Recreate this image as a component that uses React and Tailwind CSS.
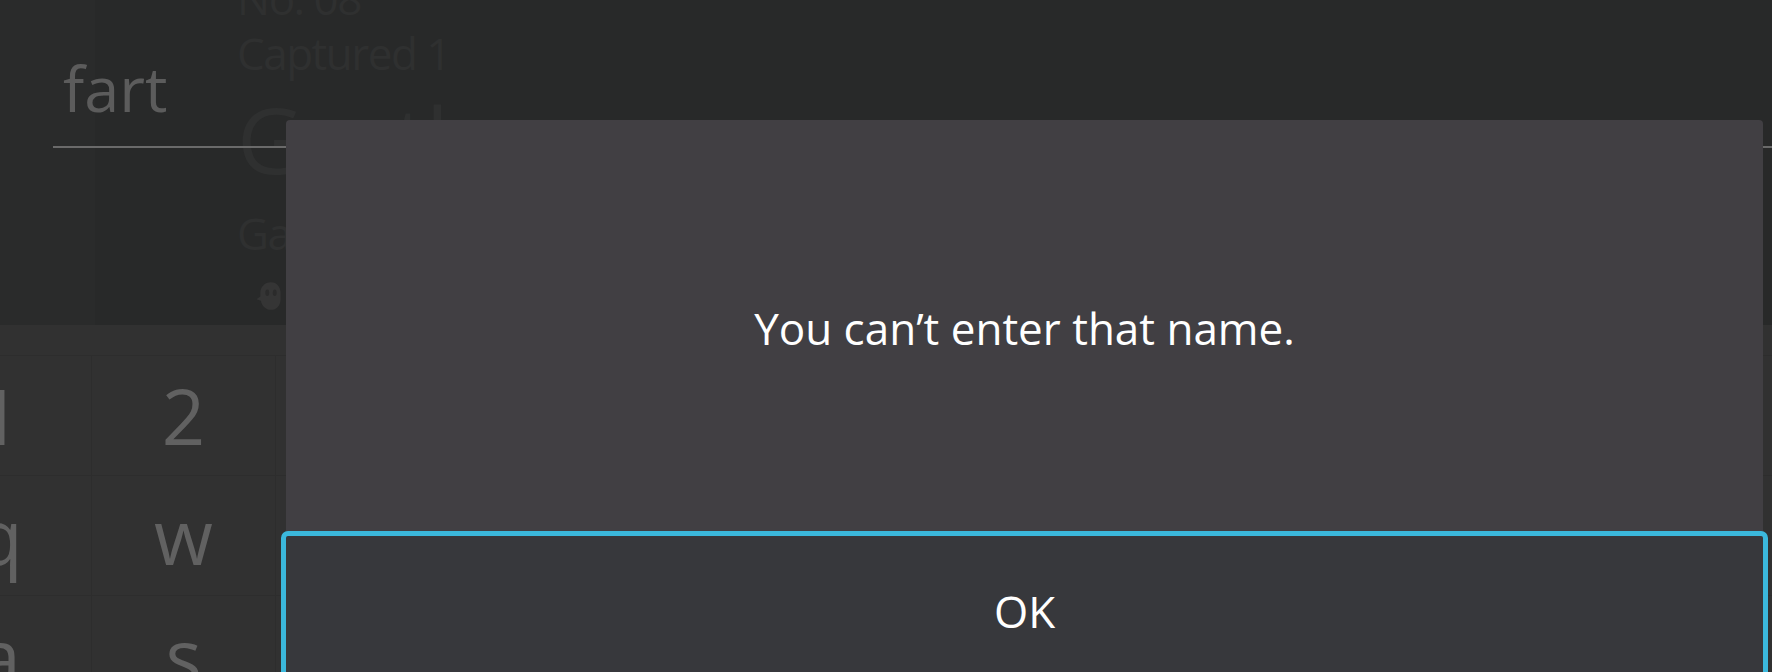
import React from 'react';

const keyRows = [
  ['1', '2', '3', '4', '5', '6', '7', '8', '9', '0'],
  ['q', 'w', 'e', 'r', 't', 'y', 'u', 'i', 'o', 'p'],
  ['a', 's', 'd', 'f', 'g', 'h', 'j', 'k', 'l', ';'],
];

function GhostIcon() {
  return (
    <svg width="32" height="32" viewBox="0 0 30 30" fill="#353535">
      <path d="M15 2c-6 0-10 4.5-10 10v3.5l-3.5 2.5 4 1.5c1 5 4.5 8.5 9.5 8.5s9-4 9-10V12c0-5.5-3.5-10-9-10z" />
      <ellipse cx="11.5" cy="12" rx="1.8" ry="3" fill="#2b2b2b" />
      <ellipse cx="18.5" cy="12" rx="1.8" ry="3" fill="#2b2b2b" />
    </svg>
  );
}

export default function App() {
  return (
    <div
      className="relative w-[1772px] h-[672px] overflow-hidden bg-[#313131]"
      style={{ fontFamily: '"Open Sans", "Noto Sans", sans-serif' }}
    >
      {/* Top: name field over the faded summary */}
      <div className="relative h-[325px] flex bg-[#282929]">
        <div className="w-[95px] h-full bg-[#2a2b2b]" />
        <div className="ml-[142px] -mt-[29px] flex flex-col text-[#2f3030] tracking-[-1.5px]">
          <div className="h-[55px] text-[44px] leading-[55px] whitespace-nowrap">No.&nbsp;08</div>
          <div className="h-[55px] text-[44px] leading-[55px] whitespace-nowrap">Captured&nbsp;1</div>
          <div className="h-[92px] text-[92px] leading-[92px] mt-[12px] whitespace-nowrap">Gastly</div>
          <div className="h-[50px] text-[44px] leading-[50px] mt-[23px] whitespace-nowrap">Gastly</div>
          <div className="mt-[22px] ml-[18px]">
            <GhostIcon />
          </div>
        </div>

        <div className="absolute left-[53px] right-0 top-[56px] h-[92px] border-b-2 border-[#6a6a6a] pl-[10px]">
          <span className="block text-[63px] leading-none text-[#5c5c5c]">fart</span>
        </div>
      </div>

      {/* Keyboard */}
      <div className="pt-[30px] -ml-[92px]">
        {keyRows.map((row, i) => (
          <div key={i} className="flex h-[120px] border-t border-[#2d2d2d]">
            {row.map((k, j) => (
              <div
                key={j}
                className="w-[184px] shrink-0 flex items-center justify-center border-r border-[#2d2d2d] text-[76px] leading-none text-[#616161]"
              >
                {k}
              </div>
            ))}
          </div>
        ))}
      </div>

      {/* Dialog */}
      <div className="absolute left-[286px] top-[120px] w-[1477px] flex flex-col">
        <div className="h-[416px] bg-[#413f43] rounded-t-[4px] flex items-center justify-center">
          <p className="text-[44px] leading-none text-white">You can’t enter that name.</p>
        </div>
        <button className="h-[150px] bg-[#37383c] rounded-[2px] outline-solid outline-[5px] outline-[#3bb8dc] flex items-center justify-center text-[44px] leading-none text-white">
          OK
        </button>
      </div>
    </div>
  );
}
